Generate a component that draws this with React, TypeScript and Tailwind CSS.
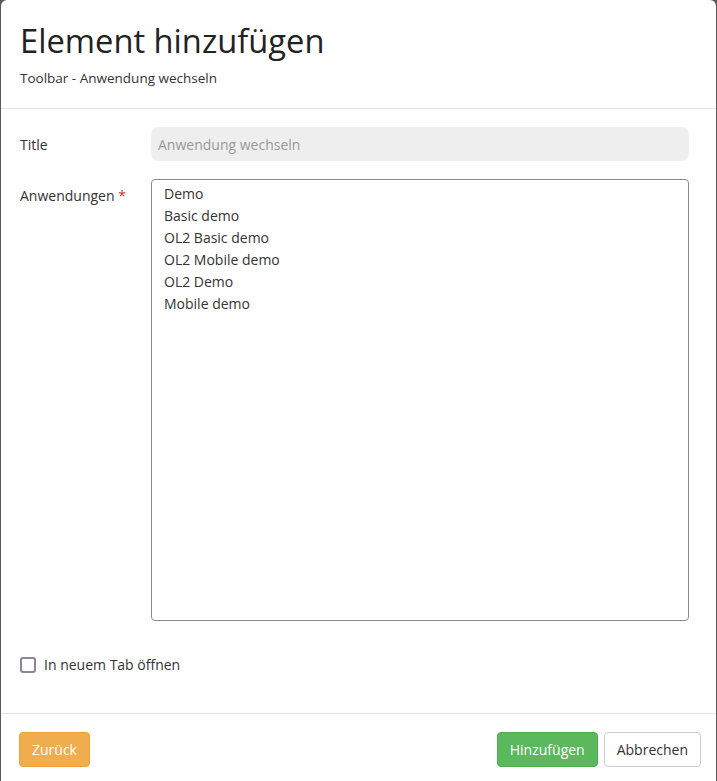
import { useState } from "react";

const APPS = ["Demo", "Basic demo", "OL2 Basic demo", "OL2 Mobile demo", "OL2 Demo", "Mobile demo"];

export default function App() {
  const [newTab, setNewTab] = useState(false);

  return (
    <div className="h-[781px] overflow-hidden bg-[#5a5a5a] pl-px pr-px font-['Open_Sans',sans-serif] text-[#333]">
      <div className="flex h-[781px] flex-col rounded-t-md bg-white">
        {/* Header */}
        <div className="border-b border-[#e5e5e5] px-[19px] pb-[20px] pt-[23px]">
          <h1 className="text-[32.7px] leading-[35px] text-[#222]">Element hinzufügen</h1>
          <p className="mt-[10px] text-[13.5px] leading-5 text-[#333]">Toolbar - Anwendung wechseln</p>
        </div>

        {/* Body */}
        <div className="flex flex-col px-[19px] pt-[18px]">
          <div className="flex items-center">
            <label className="w-[131px] pt-[2px] text-sm font-medium">Title</label>
            <input
              className="h-[34px] w-[538px] rounded-lg bg-[#eeeeee] px-[7px] text-sm text-[#555] placeholder:text-[#999] outline-none"
              placeholder="Anwendung wechseln"
              disabled
            />
          </div>

          <div className="mt-[18px] flex">
            <label className="w-[131px] pt-[7px] text-sm font-medium">
              Anwendungen <span className="text-[#c9302c]">*</span>
            </label>
            <div className="h-[442px] w-[538px] rounded-sm border border-[#8b8799] px-3 pt-[3px]">
              {APPS.map((a) => (
                <div key={a} className="text-sm leading-[22px]">
                  {a}
                </div>
              ))}
            </div>
          </div>

          <label className="mt-[34px] flex items-center gap-[8px]">
            <button
              onClick={() => setNewTab(!newTab)}
              className="h-4 w-4 rounded-[3px] border-2 border-[#8b8799] bg-white"
            />
            <span className="text-sm font-medium">In neuem Tab öffnen</span>
          </label>
        </div>

        {/* Footer */}
        <div className="mt-[38px] flex items-center justify-between border-t border-[#e5e5e5] pl-[18px] pr-[15px] pt-[18px]">
          <button className="h-[35px] rounded border border-[#eea236] bg-[#f0ad4e] px-3 text-sm text-white">Zurück</button>
          <div className="flex gap-[6px]">
            <button className="h-[35px] rounded border border-[#4cae4c] bg-[#5cb85c] px-3 text-sm text-white">Hinzufügen</button>
            <button className="h-[35px] rounded border border-[#ccc] bg-white px-3 text-sm text-[#333]">Abbrechen</button>
          </div>
        </div>
      </div>
    </div>
  );
}
